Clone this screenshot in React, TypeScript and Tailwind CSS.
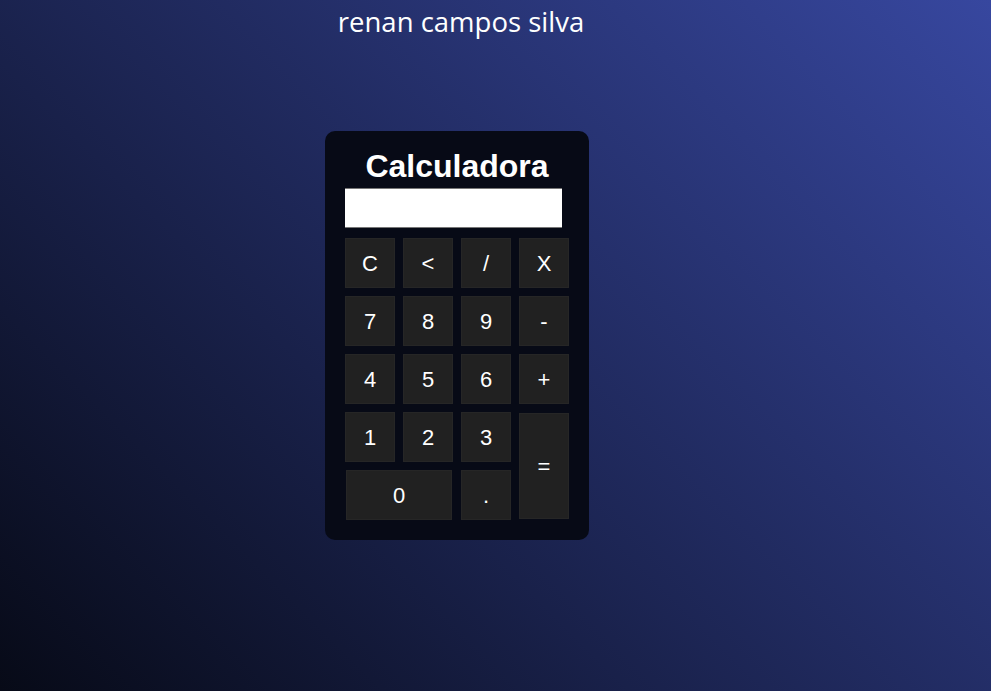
const keys = [
  ["C", "<", "/", "X"],
  ["7", "8", "9", "-"],
  ["4", "5", "6", "+"],
];

const Key = ({ label, className = "" }: { label: string; className?: string }) => (
  <button
    className={`flex items-center justify-center bg-[#212121] text-white text-[22px] border border-[#262626] ${className}`}
  >
    {label}
  </button>
);

export default function App() {
  return (
    <div className="min-h-[691px] w-full bg-[linear-gradient(45deg,#070a17,#37479f)] font-['Liberation_Sans',Arial,sans-serif]">
      <div className="ml-[311px] w-[300px] text-center text-white text-[27.5px] leading-[43px] font-['Open_Sans',sans-serif]">
        renan campos silva
      </div>

      <div className="ml-[325px] mt-[88px] w-[264px] rounded-[10px] bg-[#070a16] p-5">
        <h1 className="m-0 pb-[6px] text-center text-[32px] font-bold leading-[31px] text-white">Calculadora</h1>
        <div className="h-10 w-[217px] bg-white border-y border-[#767676]"></div>

        <div className="mt-[10px] grid grid-cols-[repeat(4,50px)] auto-rows-[50px] gap-2">
          {keys.flat().map((k) => (
            <Key key={k} label={k} />
          ))}
          <Key label="1" />
          <Key label="2" />
          <Key label="3" />
          <Key label="=" className="row-span-2 h-[106px] mt-px" />
          <Key label="0" className="col-span-2 w-[106px] ml-px" />
          <Key label="." />
        </div>
      </div>
    </div>
  );
}
